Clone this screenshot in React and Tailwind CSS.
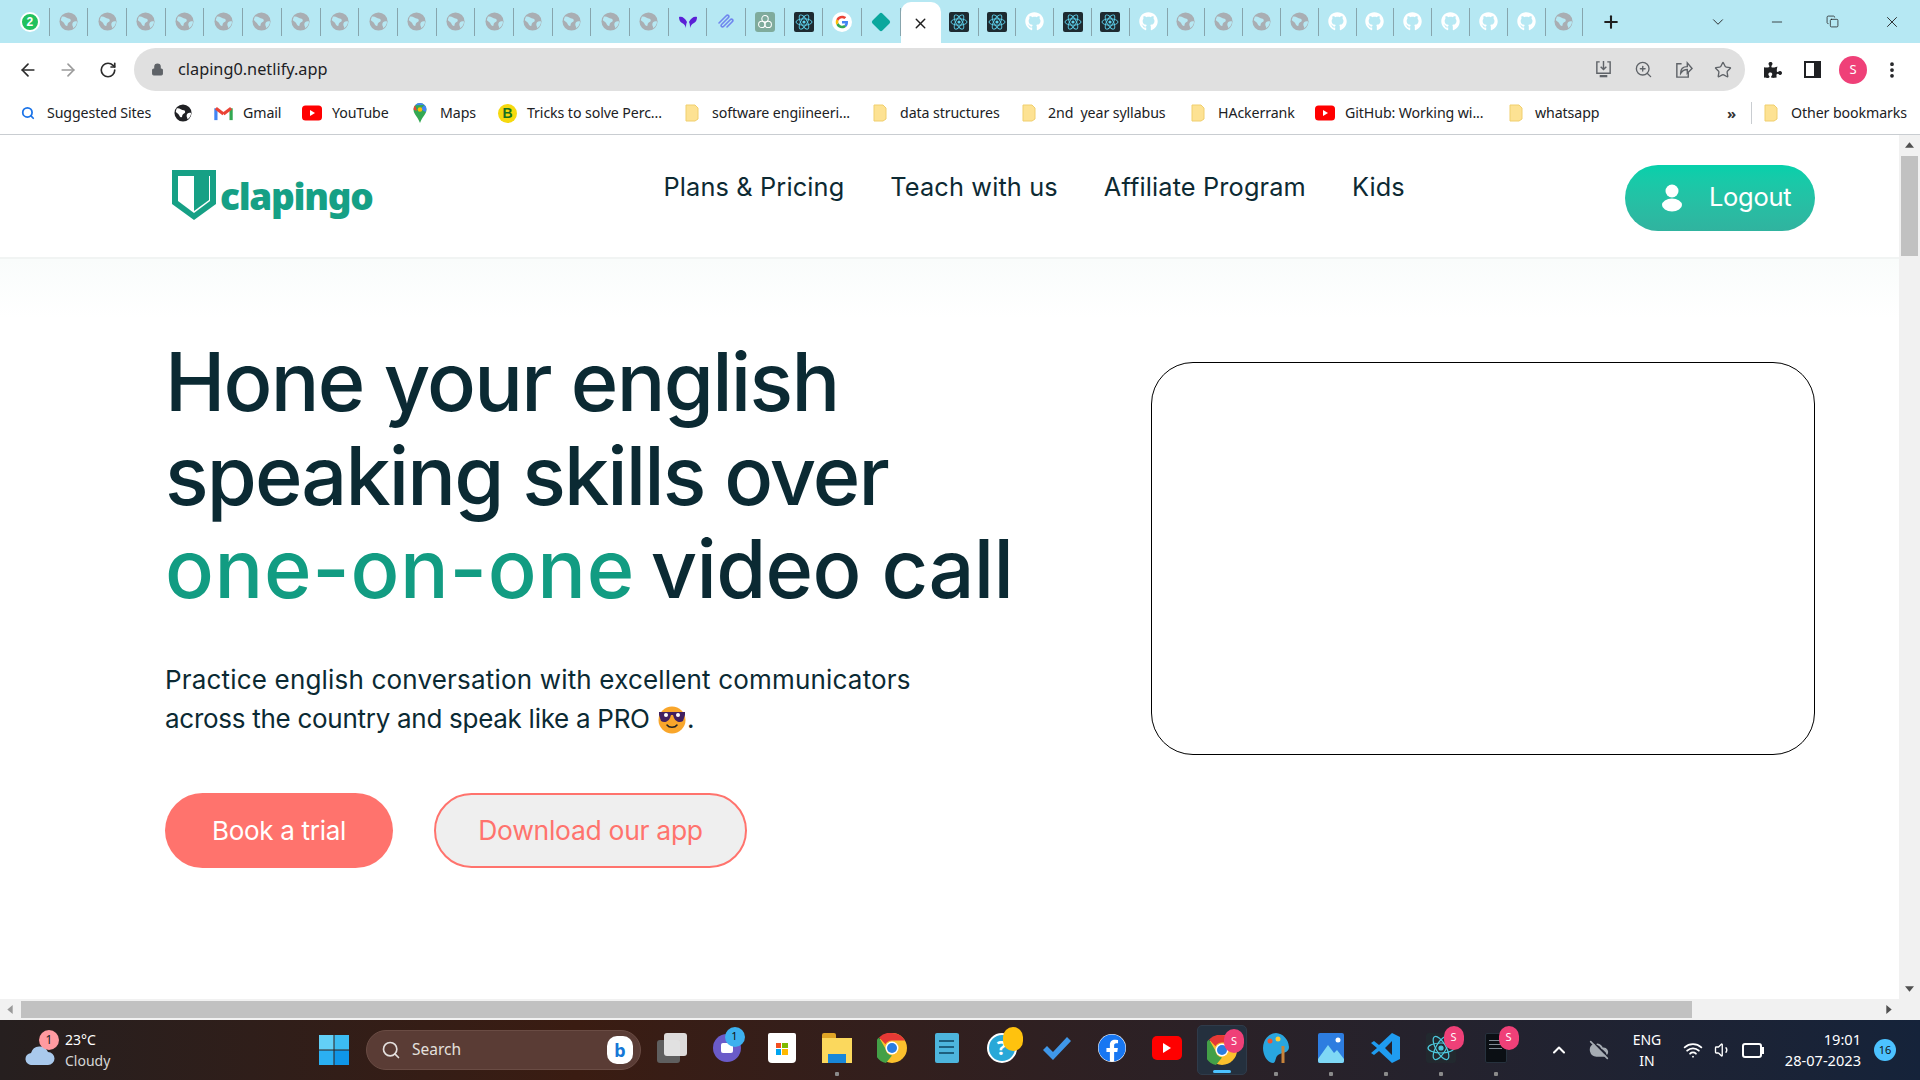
import React from "react";
import { FaGithub, FaFacebook, FaPuzzlePiece } from "react-icons/fa";
import { ArrowLeft, ArrowRight, RotateCw, Lock, X, Plus, ChevronDown, Minus, ZoomIn, Star, MoreVertical, Search, ChevronUp, Wifi, Volume1, CloudOff, Copy } from "lucide-react";

const GlobeShape = ({ cls, hole }) => (
  <svg viewBox="0 0 20 20" className={cls}>
    <circle cx="10" cy="10" r="9.5" fill="currentColor" />
    <path d="M3 5c3-1 5 2 8 2 1 0 2 2 1 3-2 1-3 2-3 4 0 1-2 1-3-1-1-3-4-3-4-5z" fill={hole} />
    <path d="M19 10c-2-1-5 0-5 3 0 2 1 2 1 4 2-1 4-4 4-7z" fill={hole} />
  </svg>
);
const Globe = () => <GlobeShape cls="w-[19px] h-[19px] text-[#a9aeb3]" hole="#b6e8f3" />;
const Git = () => <FaGithub className="w-[19px] h-[19px] text-white" />;
const ReactIco = () => (
  <svg viewBox="0 0 20 20" className="w-5 h-5">
    <rect width="20" height="20" rx="2" fill="#1e2a30" />
    <g fill="none" stroke="#5fd3ee" strokeWidth="0.9">
      <ellipse cx="10" cy="10" rx="8" ry="3.2" />
      <ellipse cx="10" cy="10" rx="8" ry="3.2" transform="rotate(60 10 10)" />
      <ellipse cx="10" cy="10" rx="8" ry="3.2" transform="rotate(120 10 10)" />
    </g>
    <circle cx="10" cy="10" r="1.6" fill="#5fd3ee" />
  </svg>
);
const GoogleG = () => (
  <svg viewBox="0 0 20 20" className="w-5 h-5">
    <circle cx="10" cy="10" r="10" fill="#fff" />
    <path d="M16 10.2c0-.5 0-.9-.1-1.3H10v2.5h3.4c-.2.8-.6 1.4-1.3 1.9l2 1.6c1.2-1.1 1.9-2.7 1.9-4.7z" fill="#4285f4" />
    <path d="M10 16.2c1.7 0 3-.5 4.1-1.5l-2-1.6c-.5.4-1.2.6-2.1.6-1.6 0-3-1.1-3.5-2.6l-2.1 1.6c1 2 3.1 3.5 5.6 3.5z" fill="#34a853" />
    <path d="M6.5 11.1c-.3-.7-.3-1.6 0-2.3L4.4 7.2c-.9 1.7-.9 3.9 0 5.5z" fill="#fbbc05" />
    <path d="M10 6.2c.9 0 1.7.3 2.4.9l1.8-1.8C13.1 4.3 11.7 3.8 10 3.8c-2.5 0-4.6 1.4-5.6 3.4l2.1 1.6C7 7.3 8.4 6.2 10 6.2z" fill="#ea4335" />
  </svg>
);
const Purple = () => (
  <svg viewBox="0 0 20 20" className="w-5 h-5"><path d="M1 5c3-1 6 1 8 5-1 2-1 4-1 6-1-3-2-4-4-5S1 8 1 5zM19 5c-3-1-6 1-8 5 1 2 1 4 1 6 1-3 2-4 4-5s3-3 3-6z" fill="#5b1fd6" /></svg>
);
const Wave = () => (
  <svg viewBox="0 0 20 20" className="w-5 h-5" fill="none" stroke="#6f86ee" strokeWidth="1.6" strokeLinecap="round" strokeLinejoin="round"><path d="M3 11l7-7c2-2 4 0 2 2l-6 6c-2 2 0 4 2 2l6-6c2-2 4 0 2 2l-5 5" /></svg>
);
const Gpt = () => (
  <div className="w-5 h-5 rounded-[3px] bg-[#7fab9c] flex items-center justify-center">
    <svg viewBox="0 0 20 20" className="w-4 h-4" fill="none" stroke="#fff" strokeWidth="1.3"><circle cx="10" cy="6" r="4" /><circle cx="6" cy="13" r="4" /><circle cx="14" cy="13" r="4" /></svg>
  </div>
);
const Diamond = () => <div className="w-[14px] h-[14px] rotate-45 rounded-[2px] bg-[#0ba79d]" />;
const Whats = () => (
  <div className="w-[20px] h-[20px] flex items-center justify-center rounded-full bg-[#22c15e] border-2 border-white">
    <span className="text-[12px] font-bold text-white font-['Liberation_Sans']">2</span>
  </div>
);

const Tab = ({ children, narrow }) => (
  <div className={narrow ? "shrink-0 w-[37.8px] h-[28px] flex items-center justify-center border-r border-[#87a5ad]" : "shrink-0 w-[38.7px] h-[28px] flex items-center justify-center border-r border-[#87a5ad]"}>
    {children}
  </div>
);

const TabBar = () => {
  const left = [<Whats />, ...Array(16).fill(0).map(() => <Globe />), <Purple />, <Wave />, <Gpt />, <ReactIco />, <GoogleG />, <Diamond />];
  const right = [<ReactIco />, <ReactIco />, <Git />, <ReactIco />, <ReactIco />, <Git />, <Globe />, <Globe />, <Globe />, <Globe />, <Git />, <Git />, <Git />, <Git />, <Git />, <Git />, <Globe />];
  return (
    <div className="h-[43px] bg-[#b6e8f3] flex items-center pl-[11px] text-[#1f1f1f]">
      {left.map((c, i) => <Tab key={i}>{c}</Tab>)}
      <div className="shrink-0 w-[40px] h-[43px] mt-[3px] bg-white rounded-t-[10px] flex items-center justify-center">
        <X className="w-[17px] h-[17px]" strokeWidth={2} />
      </div>
      {right.map((c, i) => <Tab narrow key={i}>{c}</Tab>)}
      <Plus className="shrink-0 w-[20px] h-[20px] ml-[18px]" strokeWidth={2.5} />
      <ChevronDown className="shrink-0 w-[18px] h-[18px] ml-[88px]" strokeWidth={1.2} />
      <Minus className="shrink-0 w-[16px] h-[16px] ml-[42px]" strokeWidth={1.2} />
      <Copy className="shrink-0 w-[13px] h-[13px] ml-[41px]" strokeWidth={1.4} />
      <X className="shrink-0 w-[18px] h-[18px] ml-[44px]" strokeWidth={1.2} />
    </div>
  );
};

const InstallI = () => (
  <svg viewBox="0 0 20 20" className="w-[19px] h-[19px]" fill="none" stroke="currentColor" strokeWidth="1.5">
    <path d="M6 2H3v12h14V2h-3" /><path d="M10 1v9M7 7l3 3 3-3" /><path d="M6 17h8" strokeWidth="2.4" />
  </svg>
);
const ShareI = () => (
  <svg viewBox="0 0 20 20" className="w-[19px] h-[19px]" fill="none" stroke="currentColor" strokeWidth="1.5">
    <path d="M8 4H3v14h12v-5" /><path d="M7 14c0-5 3-7 7-7V3l5 6-5 5v-4c-3 0-5 1-7 4z" />
  </svg>
);

const Toolbar = () => (
  <div className="h-[49px] bg-white flex items-center pl-[18px] pt-[4px]">
    <ArrowLeft className="w-[20px] h-[20px] text-[#2b2b2b]" strokeWidth={2} />
    <ArrowRight className="w-[20px] h-[20px] ml-[20px] text-[#9b9b9b]" strokeWidth={2} />
    <RotateCw className="w-[18px] h-[18px] ml-[21px] text-[#2b2b2b]" strokeWidth={2.2} />
    <div className="ml-[17px] w-[1611px] h-[43px] rounded-full bg-[#e0e0e0] flex items-center pl-[17px] pr-[13px]">
      <Lock className="w-[13px] h-[13px] text-[#5f6368]" fill="#5f6368" strokeWidth={2} />
      <span className="ml-[14px] text-[16.3px] text-[#202124] font-['Noto_Sans',sans-serif]">claping0.netlify.app</span>
      <div className="ml-auto flex items-center gap-[21px] text-[#5f6368]">
        <InstallI />
        <ZoomIn className="w-[19px] h-[19px]" strokeWidth={1.7} />
        <ShareI />
        <Star className="w-[18px] h-[18px]" strokeWidth={1.8} />
      </div>
    </div>
    <FaPuzzlePiece className="ml-[19px] w-[18px] h-[18px] text-[#202124]" />
    <div className="ml-[22px] w-[17px] h-[17px] border-[2px] border-r-[7px] border-[#202124]" />
    <div className="ml-[18px] w-[28px] h-[28px] rounded-full bg-[#ef4078] text-white text-[13px] flex items-center justify-center font-['Noto_Sans',sans-serif]">S</div>
    <MoreVertical className="ml-[15px] w-[20px] h-[20px] text-[#202124]" strokeWidth={2.5} />
  </div>
);

const Folder = () => (
  <svg viewBox="0 0 16 20" className="w-[16px] h-[20px] shrink-0">
    <path d="M2 2h9l3 3v11l-3 2H2z" fill="#fde293" stroke="#f0cf6e" />
  </svg>
);
const YT = () => (
  <svg viewBox="0 0 20 16" className="w-[20px] h-[16px] shrink-0"><rect width="20" height="15" y="0.5" rx="3.5" fill="#f00" /><path d="M8 5l5 3-5 3z" fill="#fff" /></svg>
);
const Gmail = () => (
  <svg viewBox="0 0 20 16" className="w-[19px] h-[16px] shrink-0" fill="none" strokeWidth="3.4">
    <path d="M2 15.5V3" stroke="#4285f4" /><path d="M18 15.5V3" stroke="#34a853" /><path d="M2 3l8 6" stroke="#ea4335" /><path d="M18 3l-8 6" stroke="#ea4335" />
  </svg>
);
const MapsI = () => (
  <svg viewBox="0 0 14 20" className="w-[14px] h-[20px] shrink-0">
    <path d="M7 0a6.5 6.5 0 0 0-6.5 6.5C.5 11 5 14 7 20c2-6 6.5-9 6.5-13.5A6.5 6.5 0 0 0 7 0z" fill="#34a853" />
    <path d="M7 0a6.5 6.5 0 0 0-5 2.3L11.5 2A6.5 6.5 0 0 0 7 0z" fill="#4285f4" />
    <path d="M2 2.3a6.5 6.5 0 0 0-1.5 4.2L4 8z" fill="#ea4335" />
    <path d="M11.5 2l-4 4 5 3c1-2 1.5-5-1-7z" fill="#4285f4" />
    <circle cx="7" cy="6.5" r="2.3" fill="#fbbc05" />
  </svg>
);
const BIco = () => (
  <div className="w-[19px] h-[19px] rounded-full bg-[#f6d90f] flex items-center justify-center shrink-0 text-[14px] font-bold text-[#15701f] font-['Liberation_Sans']">B</div>
);

const bmText = "text-[14.2px] text-[#202124] whitespace-nowrap font-['Noto_Sans',sans-serif] tracking-[-0.1px]";

const Bookmarks = () => (
  <div className="h-[43px] bg-white flex items-center pl-[21px] border-b border-[#c9cdd1]">
    <Search className="w-[14px] h-[14px] text-[#1a73e8] shrink-0" strokeWidth={3} />
    <span className={bmText + " ml-[12px] w-[106px]"}>Suggested Sites</span>
    <div className="ml-[21px]"><GlobeShape cls="w-[18px] h-[18px] text-[#202124]" hole="#ffffff" /></div>
    <div className="ml-[22px]"><Gmail /></div>
    <span className={bmText + " ml-[10px] w-[38px]"}>Gmail</span>
    <div className="ml-[21px]"><YT /></div>
    <span className={bmText + " ml-[10px] w-[58px]"}>YouTube</span>
    <div className="ml-[23px]"><MapsI /></div>
    <span className={bmText + " ml-[13px] w-[36px]"}>Maps</span>
    <div className="ml-[22px]"><BIco /></div>
    <span className={bmText + " ml-[10px] w-[135px]"}>Tricks to solve Perc...</span>
    <div className="ml-[22px]"><Folder /></div>
    <span className={bmText + " ml-[12px] w-[137px]"}>software engiineeri...</span>
    <div className="ml-[23px]"><Folder /></div>
    <span className={bmText + " ml-[12px] w-[98px]"}>data structures</span>
    <div className="ml-[23px]"><Folder /></div>
    <span className={bmText + " ml-[11px] w-[117px]"}>2nd&nbsp; year syllabus</span>
    <div className="ml-[25px]"><Folder /></div>
    <span className={bmText + " ml-[12px] w-[76px]"}>HAckerrank</span>
    <div className="ml-[21px]"><YT /></div>
    <span className={bmText + " ml-[10px] w-[140px]"}>GitHub: Working wi...</span>
    <div className="ml-[23px]"><Folder /></div>
    <span className={bmText + " ml-[11px] w-[64px]"}>whatsapp</span>
    <span className="ml-[128px] text-[15px] font-bold text-[#333] w-[24px] font-['Noto_Sans',sans-serif]">»</span>
    <div className="w-px h-[22px] bg-[#c9cdd1]" />
    <div className="ml-[11px]"><Folder /></div>
    <span className={bmText + " ml-[12px]"}>Other bookmarks</span>
  </div>
);

const Logo = () => (
  <div className="flex items-center gap-[3px] -mt-[2px]">
    <svg viewBox="0 0 46 52" className="w-[46px] h-[52px]">
      <path d="M1 1h44v34L23 51 1 35z" fill="#16a085" />
      <path d="M7 7h32v25L23 44 7 32z" fill="#fff" />
      <path d="M23 7h15v24L23 42z" fill="#16a085" />
    </svg>
    <span className="text-[37px] leading-none font-black text-[#16a085] font-['Noto_Sans',sans-serif] tracking-[-1.3px] mt-[1px]">clapingo</span>
  </div>
);

const Emoji = () => (
  <svg viewBox="0 0 30 30" className="inline-block w-[30px] h-[30px] align-[-7px]">
    <circle cx="15" cy="15" r="13.5" fill="#f9a62b" />
    <path d="M2 7h26v3l-2 6a6 6 0 0 1-9-3l-1-3h-2l-1 3a6 6 0 0 1-9 3L2 10z" fill="#42205f" />
    <circle cx="9" cy="10" r="2" fill="#fff" /><circle cx="21" cy="10" r="2" fill="#fff" />
    <path d="M10 20c2 3 8 3 10 0" fill="none" stroke="#222" strokeWidth="1.5" strokeLinecap="round" />
  </svg>
);

const Nav = () => (
  <header className="h-[124px] border-b-2 border-[#f1f4f3] flex items-center pl-[171px] pr-[84px] font-['Inter',sans-serif]">
    <Logo />
    <nav className="ml-[291px] flex items-center gap-[46px] -mt-[19px] text-[25.3px] text-[#0d2a33] tracking-[0.15px] whitespace-nowrap">
      <span>Plans &amp; Pricing</span>
      <span>Teach with us</span>
      <span>Affiliate Program</span>
      <span>Kids</span>
    </nav>
    <button className="ml-auto mt-[3px] w-[190px] h-[66px] rounded-full bg-gradient-to-b from-[#05d0ab] to-[#30b39f] text-white text-[25.5px] flex items-center pl-[37px]">
      <svg viewBox="0 0 20 28" className="w-[20px] h-[28px]" fill="#fff"><circle cx="10" cy="7" r="6.5" /><ellipse cx="10" cy="21" rx="10" ry="6.5" /></svg>
      <span className="ml-[27px] tracking-[-0.3px]">Logout</span>
    </button>
  </header>
);

const Hero = () => (
  <main className="flex-1 pl-[165px] pr-[84px] flex justify-between bg-gradient-to-b from-[#f9fcfb] to-white to-[8%] font-['Inter',sans-serif] text-[#0b2a33]">
    <div className="pt-[77px]">
      <h1 className="text-[81px] leading-[93.5px] font-medium whitespace-nowrap">
        <span className="tracking-[-1.7px]">Hone your english</span><br />
        <span className="tracking-[-1.9px]">speaking skills over</span><br />
        <span className="text-[#129c82] tracking-[0.7px]">one-on-one</span> <span className="-ml-[6px] tracking-[-0.7px]">video call</span>
      </h1>
      <p className="mt-[43px] text-[26px] leading-[39px]">
        <span className="tracking-[0.18px]">Practice english conversation with excellent communicators</span><br />
        <span className="tracking-[-0.28px]">across the country and speak like a PRO</span> <Emoji />.
      </p>
      <div className="mt-[55px] flex items-center gap-[41px]">
        <button className="w-[228px] h-[75px] rounded-full bg-[#ff736d] text-white text-[26px] tracking-[-0.3px]">Book a trial</button>
        <button className="w-[313px] h-[75px] rounded-full bg-[#efefef] border-2 border-[#ff736d] text-[#ff736d] text-[26.5px] tracking-[-0.3px] pt-[2px]">Download our app</button>
      </div>
    </div>
    <div className="mt-[103px] w-[664px] h-[393px] rounded-[42px] border border-black bg-white" />
  </main>
);

const Scroll = () => (
  <div className="w-[21px] bg-[#f1f1f1] flex flex-col items-center">
    <svg viewBox="0 0 10 6" className="w-[9px] h-[6px] mt-[7px]"><path d="M5 0l5 6H0z" fill="#505050" /></svg>
    <div className="mt-[8px] w-[17px] h-[100px] bg-[#c1c1c1]" />
    <div className="flex-1" />
    <svg viewBox="0 0 10 6" className="w-[9px] h-[6px] mb-[7px]"><path d="M5 6l5-6H0z" fill="#505050" /></svg>
  </div>
);

const HScroll = () => (
  <div className="h-[21px] bg-[#f1f1f1] flex items-center pl-[7px]">
    <svg viewBox="0 0 6 10" className="w-[6px] h-[9px]"><path d="M0 5l6-5v10z" fill="#9a9a9a" /></svg>
    <div className="ml-[8px] w-[1671px] h-[17px] bg-[#c1c1c1]" />
    <svg viewBox="0 0 6 10" className="ml-[194px] w-[6px] h-[9px]"><path d="M6 5L0 0v10z" fill="#505050" /></svg>
  </div>
);

const Dot = () => <div className="w-[4px] h-[4px] rounded-[1px] bg-[#8a8a8a] mt-[4px]" />;
const Badge = ({ t, cls }) => <div className={"absolute w-[20px] h-[24px] rounded-full flex items-center justify-center text-[11px] text-white " + cls}>{t}</div>;

const TBI = ({ children, dot }) => (
  <div className="w-[55px] h-[60px] relative flex flex-col items-center justify-center pt-[6px]">
    <div className="relative w-[30px] h-[30px] flex items-center justify-center">{children}</div>
    <div className="h-[6px] mt-[5px] flex items-start justify-center">{dot && <Dot />}</div>
  </div>
);

const Win = () => (
  <svg viewBox="0 0 30 30" className="w-[30px] h-[30px]">
    <rect x="0" y="0" width="14.5" height="14.5" fill="#63d0f7" /><rect x="15.5" y="0" width="14.5" height="14.5" fill="#3cbcf2" />
    <rect x="0" y="15.5" width="14.5" height="14.5" fill="#2bb0f2" /><rect x="15.5" y="15.5" width="14.5" height="14.5" fill="#0f96e8" />
  </svg>
);
const ChromeI = () => (
  <svg viewBox="0 0 30 30" className="w-[30px] h-[30px]">
    <circle cx="15" cy="15" r="15" fill="#fbc02d" />
    <path d="M15 0a15 15 0 0 1 13 7.5H15a7.5 7.5 0 0 0-6.5 3.7L2 4.5A15 15 0 0 1 15 0z" fill="#e53935" />
    <path d="M2 4.5l6.5 11.2A7.5 7.5 0 0 0 15 22.5L9 30A15 15 0 0 1 2 4.5z" fill="#43a047" />
    <circle cx="15" cy="15" r="6.5" fill="#fff" /><circle cx="15" cy="15" r="5" fill="#2a7de1" />
  </svg>
);

const Taskbar = () => (
  <div className="h-[60px] bg-gradient-to-r from-[#261f1f] via-[#3a1c12] via-30% to-[#15233a] flex items-center text-white font-['Noto_Sans',sans-serif] relative">
    <div className="ml-[25px] w-[30px] h-[30px] relative flex items-end">
      <svg viewBox="0 0 30 22" className="w-[30px] h-[22px]"><path d="M7 22a6 6 0 0 1-1-12 9 9 0 0 1 17-1 6.5 6.5 0 0 1 0 13z" fill="#a9c9ec" /></svg>
      <div className="absolute -top-[5px] left-[14px] w-[20px] h-[20px] rounded-full bg-[#ff9aa0] text-[#222] text-[12px] flex items-center justify-center">1</div>
    </div>
    <div className="ml-[10px] text-[14px] leading-[21px] w-[90px]">
      <div>23°C</div>
      <div className="text-[#d6d6d6]">Cloudy</div>
    </div>
    <div className="ml-[164px]"><Win /></div>
    <div className="ml-[17px] w-[275px] h-[40px] rounded-full bg-[#5a3c35] border border-[#6a4c44] flex items-center pl-[14px] pr-[7px]">
      <Search className="w-[20px] h-[20px] text-[#e4e0de]" strokeWidth={2} />
      <span className="ml-[11px] text-[15.5px] text-[#e4e0de]">Search</span>
      <div className="ml-auto w-[26px] h-[28px] rounded-[10px] bg-white flex items-center justify-center text-[#1677d6] font-bold text-[18px]">b</div>
    </div>
    <div className="ml-[3px] flex items-center">
      <TBI>
        <div className="relative w-[30px] h-[30px]">
          <div className="absolute left-0 bottom-0 w-[23px] h-[23px] rounded-[3px] bg-[#5f5f5f]" />
          <div className="absolute right-0 top-0 w-[23px] h-[23px] rounded-[3px] bg-[#f0f0f0] opacity-90" />
        </div>
      </TBI>
      <TBI>
        <div className="w-[28px] h-[28px] rounded-full bg-[#6a5bc9] flex items-center justify-center"><div className="w-[12px] h-[10px] rounded-[2px] bg-white" /></div>
        <div className="absolute -top-[6px] right-[-3px] w-[20px] h-[20px] rounded-full bg-[#3db1ef] text-[11px] flex items-center justify-center text-[#111]">1</div>
      </TBI>
      <TBI>
        <div className="w-[28px] h-[30px] rounded-b-[4px] rounded-t-[2px] bg-white grid grid-cols-2 gap-[1px] p-[8px] pt-[10px]">
          <div className="bg-[#f25022]" /><div className="bg-[#7fba00]" /><div className="bg-[#00a4ef]" /><div className="bg-[#ffb900]" />
        </div>
      </TBI>
      <TBI dot>
        <div className="w-[30px] h-[30px] flex flex-col">
          <div className="w-[14px] h-[5px] bg-[#e0a526] rounded-t-[2px]" />
          <div className="flex-1 bg-[#fbd85d] flex items-end justify-center"><div className="w-[18px] h-[9px] bg-[#1887d9]" /></div>
        </div>
      </TBI>
      <TBI><ChromeI /></TBI>
      <TBI>
        <div className="w-[24px] h-[30px] rounded-[2px] bg-[#4db5dd] flex flex-col gap-[4px] items-center pt-[7px]">
          <div className="w-[15px] h-[2px] bg-[#1d5f7e]" /><div className="w-[15px] h-[2px] bg-[#1d5f7e]" /><div className="w-[15px] h-[2px] bg-[#1d5f7e]" />
        </div>
      </TBI>
      <TBI>
        <div className="w-[30px] h-[30px] rounded-full bg-[#28a8d8] border-2 border-white flex items-center justify-center text-white font-bold text-[20px]">?</div>
        <div className="absolute -top-[6px] right-[-6px] w-[20px] h-[24px] rounded-full bg-[#ffc20e]" />
      </TBI>
      <TBI>
        <svg viewBox="0 0 30 30" className="w-[30px] h-[30px]"><path d="M1 17l4-4 6 6L25 4l4 4-18 19z" fill="#3f97e8" /></svg>
      </TBI>
      <TBI><FaFacebook className="w-[28px] h-[28px] text-[#1877f2] bg-white rounded-full" /></TBI>
      <TBI>
        <div className="w-[30px] h-[24px] rounded-[5px] bg-[#f00] flex items-center justify-center">
          <div className="w-0 h-0 border-y-[5px] border-y-transparent border-l-[8px] border-l-white" />
        </div>
      </TBI>
    </div>
    <div className="w-[50px] h-[50px] rounded-[5px] bg-[#24303e] border border-[#2f3b4a] flex items-center justify-center relative ml-[3px]">
      <ChromeI />
      <Badge t="S" cls="top-[3px] right-[2px] bg-[#ef4078]" />
      <div className="absolute bottom-[1px] w-[18px] h-[3px] rounded-full bg-[#4cc2ff]" />
    </div>
    <div className="flex items-center ml-[1px]">
      <TBI dot>
        <svg viewBox="0 0 30 30" className="w-[30px] h-[30px]"><path d="M15 0a13 15 0 0 0-13 15c0 8 5 15 10 15 3 0 2-6 5-8 5-3 11-2 11-8A14 15 0 0 0 15 0z" fill="#29a6df" /><circle cx="9" cy="8" r="2.5" fill="#e53" /><circle cx="17" cy="6" r="2.5" fill="#fc3" /><path d="M22 13v17" stroke="#c9843b" strokeWidth="3" /></svg>
      </TBI>
      <TBI dot>
        <svg viewBox="0 0 26 30" className="w-[26px] h-[30px]"><rect width="26" height="30" rx="2" fill="#2d7de0" /><path d="M0 26l10-14 6 8 3-3 7 9v2a2 2 0 0 1-2 2H2a2 2 0 0 1-2-2z" fill="#7fd8f5" /><circle cx="20" cy="7" r="2.5" fill="#fff" /></svg>
      </TBI>
      <TBI dot>
        <svg viewBox="0 0 30 30" className="w-[30px] h-[30px]"><path d="M21 0l8 4v22l-8 4L8 18l-5 4-3-2 6-5-6-5 3-2 5 4zM21 8l-7 7 7 7z" fill="#1f9cf0" /></svg>
      </TBI>
      <TBI dot>
        <div className="w-[30px] h-[30px] rounded-[3px] bg-[#22292f] flex items-center justify-center">
          <svg viewBox="0 0 30 30" className="w-[30px] h-[30px]" fill="none" stroke="#4ecbe0" strokeWidth="1.2"><ellipse cx="15" cy="15" rx="13" ry="5" /><ellipse cx="15" cy="15" rx="13" ry="5" transform="rotate(60 15 15)" /><ellipse cx="15" cy="15" rx="13" ry="5" transform="rotate(120 15 15)" /><circle cx="15" cy="15" r="2" fill="#4ecbe0" /></svg>
        </div>
        <Badge t="S" cls="-top-[7px] -right-[8px] bg-[#ef4078]" />
      </TBI>
      <TBI dot>
        <div className="w-[22px] h-[30px] rounded-[2px] bg-[#0b0f14] border border-[#26313d] flex flex-col gap-[3px] items-center pt-[6px]">
          <div className="w-[13px] h-px bg-[#7f8a94]" /><div className="w-[13px] h-px bg-[#7f8a94]" /><div className="w-[13px] h-px bg-[#7f8a94]" />
        </div>
        <Badge t="S" cls="-top-[7px] -right-[8px] bg-[#ef4078]" />
      </TBI>
    </div>
    <ChevronUp className="ml-[26px] w-[20px] h-[20px]" strokeWidth={2.5} />
    <CloudOff className="ml-[20px] w-[20px] h-[20px] text-[#a6acb3]" fill="#a6acb3" />
    <div className="ml-[21px] text-center text-[14px] leading-[21px] w-[34px]">ENG<br />IN</div>
    <Wifi className="ml-[19px] w-[20px] h-[20px]" strokeWidth={2.2} />
    <Volume1 className="ml-[11px] w-[18px] h-[18px]" strokeWidth={1.8} />
    <div className="ml-[10px] w-[20px] h-[15px] rounded-[3px] border-[2px] border-white relative after:absolute after:content-[''] after:-right-[4px] after:top-[2px] after:w-[2px] after:h-[7px] after:bg-white" />
    <div className="ml-auto text-right text-[14.6px] leading-[21px] whitespace-nowrap">19:01<br />28-07-2023</div>
    <div className="ml-[13px] mr-[24px] w-[22px] h-[22px] rounded-full bg-[#4cc2ff] text-[#111] text-[11px] flex items-center justify-center">16</div>
  </div>
);

export default function App() {
  return (
    <div className="w-[1920px] h-[1080px] overflow-hidden flex flex-col bg-white">
      <TabBar />
      <Toolbar />
      <Bookmarks />
      <div className="flex-1 flex min-h-0">
        <div className="flex-1 flex flex-col min-w-0">
          <Nav />
          <Hero />
        </div>
        <Scroll />
      </div>
      <HScroll />
      <Taskbar />
    </div>
  );
}
